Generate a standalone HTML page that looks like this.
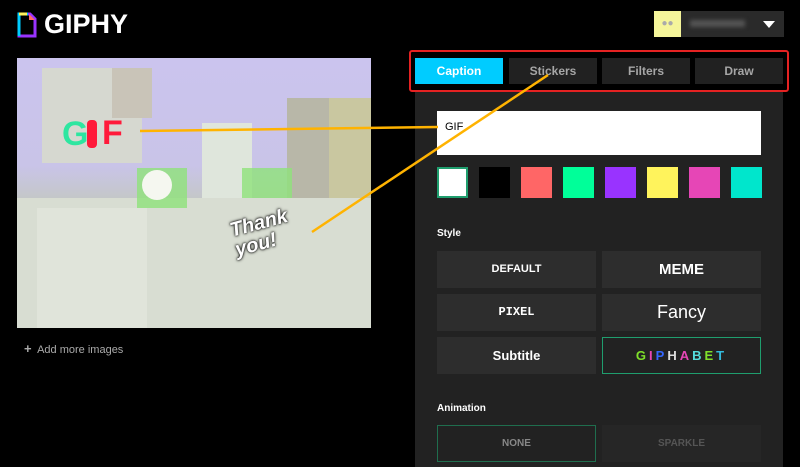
<!DOCTYPE html>
<html><head><style>
*{margin:0;padding:0;box-sizing:border-box}
body{width:800px;height:467px;background:#000;font-family:"Liberation Sans",sans-serif;position:relative;overflow:hidden;color:#fff}
.a{position:absolute}
.tab{position:absolute;top:58px;height:26px;width:88px;background:#212121;color:#a6a6a6;font-weight:bold;font-size:12px;text-align:center;line-height:26px}
.sw{position:absolute;top:167px;width:31px;height:31px}
.btn{position:absolute;width:159px;height:37px;background:#2d2d2d;text-align:center;font-weight:bold;font-size:12px;line-height:37px}
.lbl{position:absolute;left:437px;font-size:10px;font-weight:bold}
</style></head><body>
<svg class="a" style="left:17px;top:12px" width="22" height="26"><path d="M2 2h11l5 5v17H2z" fill="none" stroke="#9933ff" stroke-width="3"/><path d="M2 24V2h9" fill="none" stroke="#00ccff" stroke-width="3"/><path d="M2 2h8" stroke="#fff35c" stroke-width="3"/><path d="M12 2l6 6h-6z" fill="#ff6666"/></svg>
<div class="a" style="left:44px;top:9px;font-size:27px;font-weight:bold">GIPHY</div>
<div class="a" style="left:654px;top:11px;width:130px;height:26px;background:#2a2a2a"></div>
<div class="a" style="left:654px;top:11px;width:27px;height:26px;background:#f5f59a;color:#aaa;font-size:10px;text-align:center;line-height:26px">●●</div>
<div class="a" style="left:690px;top:20px;width:55px;height:7px;background:#555;filter:blur(2px)"></div>
<svg class="a" style="left:762px;top:20px" width="14" height="10"><path d="M1 1h12L7 8z" fill="#fff"/></svg>

<div class="a" style="left:17px;top:58px;width:354px;height:270px;overflow:hidden;background:linear-gradient(180deg,#cbc4ee 0%,#c9c4e8 40%,#c3c8c0 55%,#cfd6cc 100%)">
<div class="a" style="left:25px;top:10px;width:100px;height:95px;background:#d6d8d0"></div>
<div class="a" style="left:95px;top:10px;width:40px;height:50px;background:#c9c4b8"></div>
<div class="a" style="left:270px;top:40px;width:84px;height:140px;background:#b8b7a8"></div>
<div class="a" style="left:312px;top:40px;width:42px;height:130px;background:#c9c7a0"></div>
<div class="a" style="left:185px;top:65px;width:50px;height:80px;background:#dfe6dc"></div>
<div class="a" style="left:0;top:140px;width:354px;height:130px;background:#d8ddd2"></div>
<div class="a" style="left:20px;top:150px;width:110px;height:120px;background:#e0e4da"></div>
<div class="a" style="left:120px;top:110px;width:50px;height:40px;background:#8fe27a;opacity:.8"></div>
<div class="a" style="left:125px;top:112px;width:30px;height:30px;border-radius:50%;background:#f5f7f0"></div>
<div class="a" style="left:225px;top:110px;width:50px;height:30px;background:#8fe27a;opacity:.8"></div>
<div class="a" style="left:45px;top:57px;font-size:34px;font-weight:bold;color:#2ee6a0">G</div>
<div class="a" style="left:70px;top:62px;width:10px;height:28px;background:#ff1a3a;border-radius:4px"></div>
<div class="a" style="left:85px;top:56px;font-size:34px;font-weight:bold;color:#ff1a3a">F</div>
<div class="a" style="left:215px;top:155px;font-size:20px;font-weight:bold;font-style:italic;color:#fff;transform:rotate(-15deg);text-shadow:0 0 3px #000,0 0 2px #000;line-height:20px">Thank<br>you!</div>
</div>
<div class="a" style="left:24px;top:341px;font-size:11px;color:#aaa"><b style="font-size:13px">+</b>&nbsp; Add more images</div>

<div class="a" style="left:415px;top:92px;width:368px;height:375px;background:#222"></div>
<div class="a" style="left:409px;top:50px;width:380px;height:42px;border:2px solid #e52222;border-radius:3px"></div>
<div class="tab" style="left:415px;background:#00ccff;color:#fff">Caption</div>
<div class="tab" style="left:509px">Stickers</div>
<div class="tab" style="left:602px">Filters</div>
<div class="tab" style="left:695px">Draw</div>
<div class="a" style="left:437px;top:111px;width:324px;height:44px;background:#fff;color:#000;font-size:11px;padding:10px 8px">GIF</div>
<div class="sw" style="left:437px;background:#fff;border:2px solid #1f9e6e"></div>
<div class="sw" style="left:479px;background:#000"></div>
<div class="sw" style="left:521px;background:#ff6666"></div>
<div class="sw" style="left:563px;background:#00ff99"></div>
<div class="sw" style="left:605px;background:#9933ff"></div>
<div class="sw" style="left:647px;background:#fff35c"></div>
<div class="sw" style="left:689px;background:#e646b6"></div>
<div class="sw" style="left:731px;background:#00e6cc"></div>
<div class="lbl" style="top:228px">Style</div>
<div class="btn" style="left:437px;top:251px;font-size:11px">DEFAULT</div>
<div class="btn" style="left:602px;top:251px;font-size:15px">MEME</div>
<div class="btn" style="left:437px;top:294px;font-family:'Liberation Mono',monospace;font-size:12px">PIXEL</div>
<div class="btn" style="left:602px;top:294px;font-weight:normal;font-size:18px">Fancy</div>
<div class="btn" style="left:437px;top:337px;font-size:13px">Subtitle</div>
<div class="btn" style="left:602px;top:337px;border:1px solid #1f9e6e;background:#222;font-size:13px;letter-spacing:3px;line-height:35px"><span style="color:#7fe02a">G</span><span style="color:#e646b6">I</span><span style="color:#3366ff">P</span><span style="color:#ddd">H</span><span style="color:#e646b6">A</span><span style="color:#5dd">B</span><span style="color:#7fe02a">E</span><span style="color:#3bd">T</span></div>
<div class="lbl" style="top:403px">Animation</div>
<div class="btn" style="left:437px;top:425px;border:1px solid #1f6e4e;background:#222;color:#888;font-size:10px;line-height:35px">NONE</div>
<div class="btn" style="left:602px;top:425px;background:#262626;color:#555;font-size:10px">SPARKLE</div>
<svg class="a" style="left:0;top:0" width="800" height="467"><path d="M140 131L438 127" stroke="#ffb300" stroke-width="2.5"/><path d="M312 232L548 75" stroke="#ffb300" stroke-width="2.5"/></svg>
</body></html>
